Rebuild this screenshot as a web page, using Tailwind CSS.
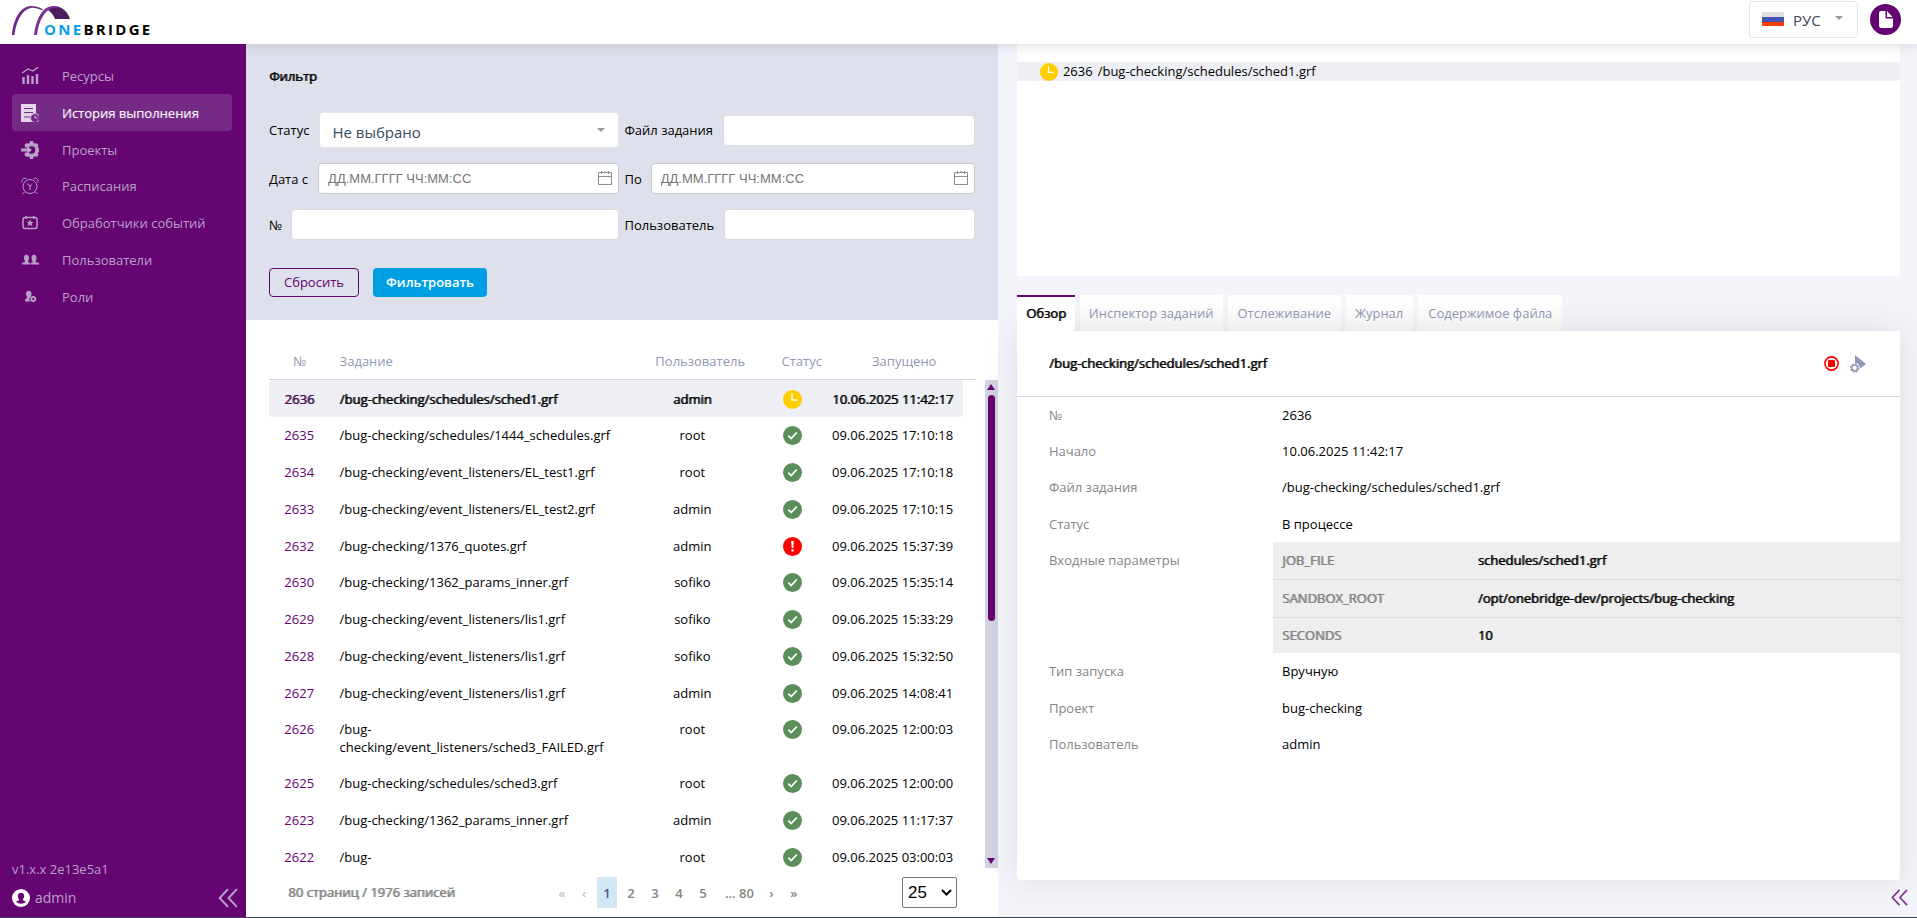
<!DOCTYPE html>
<html lang="ru">
<head>
<meta charset="utf-8">
<title>OneBridge</title>
<script src="https://cdn.jsdelivr.net/npm/@tailwindcss/browser@4"></script>
</head>
<body class="flex h-screen flex-col overflow-hidden border-b border-[#3d444d] bg-[#f4f5fa] font-['Open_Sans','Noto_Sans',sans-serif] text-[13px] leading-[18px] text-black">

<svg class="hidden" aria-hidden="true">
  <symbol id="ok" viewBox="0 0 19 19"><circle cx="9.500" cy="9.500" r="9.500" fill="#5a8f5c"/><path d="M5.300 9.600l2.900 2.900 5.600-6" fill="none" stroke="#fff" stroke-width="1.700"/></symbol>
  <symbol id="err" viewBox="0 0 19 19"><circle cx="9.500" cy="9.500" r="9.500" fill="#f00"/><path d="M8.200 4h2.600l-.5 7H8.700zM8.400 12.300h2.200v2.200H8.400z" fill="#fff"/></symbol>
  <symbol id="wait" viewBox="0 0 19 19"><circle cx="9.500" cy="9.500" r="9.500" fill="#ffcd00"/><path d="M9 3v7h5.500" fill="none" stroke="#fff" stroke-width="1.300"/></symbol>
  <symbol id="cal" viewBox="0 0 14 14"><path d="M.5 1.500h13v12H.5zM.5 5.500h13M3.500 0v3M7 0v1M10.500 0v3" fill="none" stroke="#8c8c8c"/></symbol>
  <symbol id="less" viewBox="0 0 18 18"><path d="M9 1L1.500 9 9 17M17 1L9.500 9 17 17" fill="none" stroke="currentColor" stroke-width="1.800"/></symbol>
</svg>

<header class="relative z-10 flex h-11 shrink-0 items-center bg-white pl-3 pr-4 shadow-[0_0_16px_rgba(0,0,0,0.15)]">
  <a href="#" aria-label="OneBridge" class="mr-auto">
    <svg width="142" height="44" viewBox="12 0 142 44">
      <path d="M12 35C13 20 20 6 31 6c5 0 9 1.500 12 3.500l-1 .7C38 8.500 34 7.500 31 8 22 9.500 16 22 14.500 35z" fill="#6d2d84"/>
      <path d="M48 10c3-2.800 6-4 10-3.300C64 8 68 13 70 19H55c-1.500-4-4-7-7-9z" fill="#4c1d5e"/>
      <path d="M34 35C36 20 42 6 53 6c4 0 7 1 10 3-4-1.500-7-2-10-1C44 10 38.500 22 37 35z" fill="#7b3093"/>
      <text x="44" y="35" font-family="Open Sans" font-size="15" font-weight="700" letter-spacing="2.300" fill="#0aa0e6">ONE<tspan fill="#000">BRIDGE</tspan></text>
    </svg>
  </a>
  <div class="flex items-center gap-3 pb-1.5">
    <button class="flex h-[37px] w-[109px] items-center rounded border border-[#e3e4e8] bg-white pl-3 text-[15px] text-[#3b4859]">
      <svg width="22" height="14"><path d="M0 0h22v5H0z" fill="#dfdfdf"/><path d="M0 5h22v5H0z" fill="#4453b5"/><path d="M0 10h22v4H0z" fill="#ff3c00"/></svg>
      <span class="ml-[9px] mr-3.5 pt-0.5">РУС</span>
      <svg width="8" height="4" class="mb-0.5"><path d="M0 0h8L4 4z" fill="#999"/></svg>
    </button>
    <button aria-label="Документ" class="h-[31px] w-[31px]">
      <svg width="31" height="31" viewBox="0 0 31 31"><circle cx="15.500" cy="15.500" r="15.500" fill="#640572"/><path d="M11 7h4.500v7.500H23v7a2.500 2.500 0 0 1-2.500 2.500H11.500A2.500 2.500 0 0 1 9 21.500V9a2 2 0 0 1 2-2z" fill="#fff"/><path d="M17 7l5.500 6H17z" fill="#fff"/></svg>
    </button>
  </div>
</header>

<div class="flex min-h-0 flex-1">

<aside class="relative z-20 flex w-[246px] shrink-0 flex-col bg-[#640572] pl-3 pr-3.5 pt-[13px] text-[#b9a0c9]">
  <nav class="flex flex-col">
    <a href="#" class="flex h-[37px] items-center gap-[23px] pl-[9px]"><svg width="18" height="18" fill="none" stroke="currentColor"><path d="M1 6l6-4 5 2 5-4" stroke-width="1.300"/><path d="M2.500 17v-7M7 17V8M11.500 17V9M16 17V7" stroke-width="2.400"/></svg>Ресурсы</a>
    <a href="#" class="flex h-[37px] items-center gap-[23px] rounded bg-[#752b85] pl-[9px] text-white [text-shadow:1px_0_rgba(255,255,255,0.2)]"><svg width="18" height="18"><path d="M0 0h15v18H0z" fill="#e6d6ec"/><path d="M3 4.500h9M3 8.500h9M3 13h6" stroke="#752b85"/><circle cx="14" cy="14" r="4.500" fill="#752b85" stroke="#cdb5d8"/><path d="M14 11.500V14h2.500" fill="none" stroke="#cdb5d8"/></svg>История выполнения</a>
    <a href="#" class="flex h-[37px] items-center gap-[23px] pl-[9px]"><svg width="18" height="18" fill="none" stroke="currentColor"><circle cx="10.500" cy="9" r="5.500" stroke-width="3.500"/><path d="M10.500 0v3M10.500 15v3M15 9h3M4.500 3l2 2M16.500 3l-2 2M4.500 15l2-2M16.500 15l-2-2" stroke-width="3.500"/><path d="M0 9h6" stroke="#640572" stroke-width="5"/><path d="M0 7.500h6V5l5 4-5 4v-2.500H0z" fill="currentColor" stroke="none"/></svg>Проекты</a>
    <a href="#" class="flex h-9 items-center gap-[23px] pl-[9px]"><svg width="18" height="18" fill="none" stroke="currentColor"><circle cx="9" cy="9.500" r="7"/><path d="M6 6.500L9 9l2-1.500M9 9v4M1 5.500C.5 2 2.500.5 5.500 1.500M17 5.500c.5-3.500-1.500-5-4.500-4M3.500 15l-2 2M14.500 15l2 2"/></svg>Расписания</a>
    <a href="#" class="flex h-[37px] items-center gap-[23px] pl-[9px]"><svg width="18" height="18" fill="none" stroke="currentColor"><rect x="2" y="3.500" width="14" height="11" rx="2" stroke-width="1.500"/><path d="M5 2v3M13 2v3" stroke-width="1.500"/><path d="M9 5.500l1 2.200 2.500.2-1.800 1.700.6 2.400L9 10.700 6.700 12l.6-2.400-1.800-1.700 2.500-.2z" fill="currentColor" stroke="none"/></svg>Обработчики событий</a>
    <a href="#" class="flex h-[37px] items-center gap-[23px] pl-[9px]"><svg width="18" height="18" fill="currentColor"><path d="M3 6.500C3 2.800 8 2.800 8 6.500 8 9 7 10 7 11l2 1v1.500H1V12l3-1C4 10 3 9 3 6.500zM10.500 6.500c0-3.700 5-3.700 5 0C15.500 9 14.500 10 14.500 11l3.500 1v1.500H9.700V12l2-1c0-1-1.200-2-1.200-4.500z"/></svg>Пользователи</a>
    <a href="#" class="flex h-[37px] items-center gap-[23px] pl-[9px]"><svg width="18" height="18" fill="currentColor"><path d="M5 5.500c0-3.800 5.600-3.800 5.600 0 0 1.700-.8 2.300-.8 3.500-2 2-2 3 .2 4.500H4v-2l2-1.500V9C5.600 8 5 7.500 5 5.500z"/><circle cx="12.300" cy="11" r="2" fill="none" stroke="currentColor" stroke-width="1.800"/></svg>Роли</a>
  </nav>
  <div class="mt-auto pb-[9px]">
    <p>v1.x.x 2e13e5a1</p>
    <div class="mt-2.5 flex items-center gap-[5px] text-[14px]">
      <svg width="18" height="18" viewBox="0 0 18 18"><circle cx="9" cy="9" r="9" fill="#fff"/><path d="M5.800 7c0-4.300 6.400-4.300 6.400 0 0 2-1.400 3-1.400 4.200l3.200 1.300c-2.500 3-7.500 3-10 0l3.200-1.300C7.200 10 5.800 9 5.800 7z" fill="#640572"/></svg>
      admin
      <button aria-label="Свернуть меню" class="ml-auto -mr-1.5"><svg width="20" height="20"><use href="#less"/></svg></button>
    </div>
  </div>
</aside>

<div class="flex min-w-0 flex-1">
<main class="flex w-[45%] shrink-0 flex-col bg-white">
  <form class="bg-[#dee0eb] px-[23px] pt-[23px] pb-[23px]">
    <h2 class="[text-shadow:1px_0_rgba(0,0,0,0.8)]">Фильтр</h2>
    <div class="mt-[27px] grid grid-cols-2 gap-x-[5px] gap-y-[15px]">
      <div class="flex items-center gap-2.5"><label for="st">Статус</label>
        <div class="relative min-w-0 flex-1"><select id="st" class="h-9 w-full appearance-none rounded border border-[#e4e5ec] bg-white px-3 pt-1 text-[15px] text-[#35495e]"><option>Не выбрано</option></select>
        <svg width="8" height="4" class="pointer-events-none absolute right-3.5 top-4"><path d="M0 0h8L4 4z" fill="#999"/></svg></div></div>
      <div class="flex items-center gap-2.5"><label for="jf">Файл задания</label><input id="jf" class="h-[31px] min-w-0 flex-1 rounded border border-[#dcdce0] bg-white px-2"></div>
      <div class="flex items-center gap-2.5"><label for="df">Дата с</label>
        <div class="relative min-w-0 flex-1"><input id="df" placeholder="ДД.ММ.ГГГГ ЧЧ:ММ:СС" class="block h-[31px] w-full rounded border border-[#c8c8cc] bg-white px-[9px] font-['Liberation_Sans',sans-serif] text-[13px] placeholder:text-[#777]"><svg width="14" height="14" class="pointer-events-none absolute right-[7px] top-2"><use href="#cal"/></svg></div></div>
      <div class="flex items-center gap-[9px]"><label for="dt">По</label>
        <div class="relative min-w-0 flex-1"><input id="dt" placeholder="ДД.ММ.ГГГГ ЧЧ:ММ:СС" class="block h-[31px] w-full rounded border border-[#c8c8cc] bg-white px-[9px] font-['Liberation_Sans',sans-serif] text-[13px] placeholder:text-[#777]"><svg width="14" height="14" class="pointer-events-none absolute right-[7px] top-2"><use href="#cal"/></svg></div></div>
      <div class="flex items-center gap-[9px]"><label for="no">№</label><input id="no" class="h-[31px] min-w-0 flex-1 rounded border border-[#dcdce0] bg-white px-2"></div>
      <div class="flex items-center gap-2.5"><label for="us">Пользователь</label><input id="us" class="h-[31px] min-w-0 flex-1 rounded border border-[#dcdce0] bg-white px-2"></div>
    </div>
    <div class="mt-7 flex gap-3.5">
      <button type="reset" class="h-[29px] w-[90px] rounded-sm border border-[#640572] pb-px text-[#640572]">Сбросить</button>
      <button type="button" class="h-[29px] w-[114px] rounded-sm bg-[#009fe3] pb-px font-semibold text-white">Фильтровать</button>
    </div>
  </form>

  <div class="pl-[23px] pr-[22px] pt-[23px]">
    <table class="w-full table-fixed border-b border-[#d1d3e0] text-[#9298b3]">
      <colgroup><col class="w-[9%]"><col class="w-[42%]"><col class="w-[20%]"><col class="w-[9%]"><col class="w-[20%]"></colgroup>
      <thead><tr class="h-9"><th class="pr-0.5 font-normal">№</th><th class="pl-[7px] text-left font-normal">Задание</th><th class="font-normal">Пользователь</th><th class="pr-0.5 font-normal">Статус</th><th class="pr-0.5 font-normal">Запущено</th></tr></thead>
    </table>
  </div>
  <div class="flex min-h-0 flex-1">
    <div class="min-w-0 flex-1 overflow-hidden pl-[23px] pr-[22px]">
      <table class="w-full table-fixed">
        <colgroup><col class="w-[9%]"><col class="w-[42%]"><col class="w-[20%]"><col class="w-[9%]"><col class="w-[20%]"></colgroup>
        <tbody id="rows"></tbody>
      </table>
    </div>
    <div class="flex w-[13px] shrink-0 flex-col items-center bg-[#d1d3e0] py-1">
      <svg width="8" height="6"><path d="M0 6L4 0l4 6z" fill="#640572"/></svg>
      <div class="mt-[5px] h-[226px] w-[7px] rounded-full bg-[#640572]"></div>
      <svg width="8" height="6" class="mt-auto"><path d="M0 0h8L4 6z" fill="#640572"/></svg>
    </div>
  </div>

  <footer class="flex h-[49px] shrink-0 items-center pl-[42px] pr-[41px] text-[#858585]">
    <p class="pb-px [text-shadow:1px_0_rgba(133,133,133,0.9)]">80 страниц / 1976 записей</p>
    <nav class="ml-auto mr-[97px] flex items-center font-semibold">
      <button class="w-[22px] text-[#c4c4c4]">«</button><button class="w-[22px] text-[#c4c4c4]">‹</button>
      <button class="mx-0.5 h-[31px] w-5 bg-[#d3e7f2] text-[#3a5a9a]">1</button>
      <button class="w-6">2</button><button class="w-6">3</button><button class="w-6">4</button><button class="w-6">5</button>
      <button class="w-[45px] pl-1">... 80</button><button class="w-[23px]">›</button><button class="w-[22px]">»</button>
    </nav>
    <div class="relative">
      <select aria-label="Записей на странице" class="h-[31px] w-[55px] appearance-none rounded-xs border border-[#767676] bg-white pl-[5px] font-['Liberation_Sans',sans-serif] text-[17px] text-black"><option>25</option></select>
      <svg width="11" height="7" class="pointer-events-none absolute right-[5px] top-3"><path d="M1 1l4.500 4.500L10 1" fill="none" stroke="#000" stroke-width="2"/></svg>
    </div>
  </footer>
</main>

<section class="relative flex min-w-0 flex-1 flex-col pl-[19px] pr-[17px] pb-[37px]">
  <div class="h-[232px] shrink-0 bg-white pt-[18px]">
    <a href="#" class="flex h-[19px] items-center gap-[5px] rounded-r bg-[#eeeff4] pl-[23px]"><svg width="18" height="18"><use href="#wait"/></svg><span class="pb-0.5">2636</span><span class="pb-0.5">/bug-checking/schedules/sched1.grf</span></a>
  </div>
  <div class="mt-[19px] flex h-9 shrink-0 gap-[5px] text-[#9298b3]" role="tablist">
    <button role="tab" aria-selected="true" class="z-10 border-t-2 border-[#640572] bg-white px-[9px] pb-0.5 text-black [text-shadow:1px_0_rgba(0,0,0,0.8)]">Обзор</button>
    <button role="tab" class="border-t-2 border-white bg-linear-to-b from-white to-[#fafafa] pl-[9px] pr-2.5 pb-0.5">Инспектор заданий</button>
    <button role="tab" class="border-t-2 border-white bg-linear-to-b from-white to-[#fafafa] pl-[9px] pr-2.5 pb-0.5">Отслеживание</button>
    <button role="tab" class="border-t-2 border-white bg-linear-to-b from-white to-[#fafafa] pl-[9px] pr-2.5 pb-0.5">Журнал</button>
    <button role="tab" class="border-t-2 border-white bg-linear-to-b from-white to-[#fafafa] px-2.5 pb-0.5">Содержимое файла</button>
  </div>
  <div class="min-h-0 flex-1 rounded-b bg-white shadow-[0_0_32px_rgba(60,60,80,0.13)]">
    <div class="flex h-[66px] items-center border-b border-[#d9dadd] pl-8 pr-[34px]">
      <h3 class="mr-auto pb-0.5 [text-shadow:1px_0_rgba(0,0,0,0.8)]">/bug-checking/schedules/sched1.grf</h3>
      <button aria-label="Остановить"><svg width="15" height="15"><circle cx="7.500" cy="7.500" r="6.600" fill="none" stroke="#f00" stroke-width="1.600"/><rect x="4" y="4" width="7" height="7" rx="1" fill="#f00"/></svg></button>
      <button aria-label="Запустить с параметрами" class="ml-[11px]"><svg width="16" height="18"><path d="M5 0l11 9-6 4.500C10 10 8 8 5 8z" fill="#9298b3"/><circle cx="4.700" cy="13" r="2.900" fill="none" stroke="#9298b3" stroke-width="1.500"/><circle cx="4.700" cy="13" r="4" fill="none" stroke="#9298b3" stroke-width="1.500" stroke-dasharray="1.600 1.540"/></svg></button>
    </div>
    <table class="w-full table-fixed text-left">
      <colgroup><col class="w-[29%]"><col class="w-[71%]"></colgroup>
      <tbody>
        <tr class="h-9"><th class="pl-8 font-normal text-[#858585]">№</th><td class="pl-[9px]">2636</td></tr>
        <tr class="h-9"><th class="pl-8 font-normal text-[#858585]">Начало</th><td class="pl-[9px]">10.06.2025 11:42:17</td></tr>
        <tr class="h-9"><th class="pl-8 font-normal text-[#858585]">Файл задания</th><td class="pl-[9px]">/bug-checking/schedules/sched1.grf</td></tr>
        <tr class="h-[37px]"><th class="pl-8 font-normal text-[#858585]">Статус</th><td class="pl-[9px]">В процессе</td></tr>
        <tr><th class="pl-8 pt-[9px] align-top font-normal text-[#858585]">Входные параметры</th><td>
          <table class="w-full table-fixed bg-[#eee]">
            <colgroup><col class="w-[32%]"><col class="w-[68%]"></colgroup>
            <tbody>
            <tr class="h-[37px] border-b border-[#d9dadd]"><th class="pl-[9px] font-normal text-[#858585] [text-shadow:1px_0_rgba(133,133,133,0.9)]">JOB_FILE</th><td class="pl-1 [text-shadow:1px_0_rgba(0,0,0,0.8)]">schedules/sched1.grf</td></tr>
            <tr class="h-[38px] border-b border-[#d9dadd]"><th class="pl-[9px] font-normal text-[#858585] [text-shadow:1px_0_rgba(133,133,133,0.9)]">SANDBOX_ROOT</th><td class="pl-1 [text-shadow:1px_0_rgba(0,0,0,0.8)]">/opt/onebridge-dev/projects/bug-checking</td></tr>
            <tr class="h-9"><th class="pl-[9px] font-normal text-[#858585] [text-shadow:1px_0_rgba(133,133,133,0.9)]">SECONDS</th><td class="pl-1 [text-shadow:1px_0_rgba(0,0,0,0.8)]">10</td></tr>
            </tbody>
          </table></td></tr>
        <tr class="h-9"><th class="pl-8 font-normal text-[#858585]">Тип запуска</th><td class="pl-[9px]">Вручную</td></tr>
        <tr class="h-[37px]"><th class="pl-8 font-normal text-[#858585]">Проект</th><td class="pl-[9px]">bug-checking</td></tr>
        <tr class="h-9"><th class="pl-8 font-normal text-[#858585]">Пользователь</th><td class="pl-[9px]">admin</td></tr>
      </tbody>
    </table>
  </div>
  <button aria-label="Развернуть панель" class="absolute bottom-[11px] right-2 text-[#863090]"><svg width="19" height="17"><use href="#less"/></svg></button>
</section>
</div>
</div>

<script>
const runs = [
  [2636, "/bug-checking/schedules/sched1.grf", "admin", "wait", "10.06.2025 11:42:17"],
  [2635, "/bug-checking/schedules/1444_schedules.grf", "root", "ok", "09.06.2025 17:10:18"],
  [2634, "/bug-checking/event_listeners/EL_test1.grf", "root", "ok", "09.06.2025 17:10:18"],
  [2633, "/bug-checking/event_listeners/EL_test2.grf", "admin", "ok", "09.06.2025 17:10:15"],
  [2632, "/bug-checking/1376_quotes.grf", "admin", "err", "09.06.2025 15:37:39"],
  [2630, "/bug-checking/1362_params_inner.grf", "sofiko", "ok", "09.06.2025 15:35:14"],
  [2629, "/bug-checking/event_listeners/lis1.grf", "sofiko", "ok", "09.06.2025 15:33:29"],
  [2628, "/bug-checking/event_listeners/lis1.grf", "sofiko", "ok", "09.06.2025 15:32:50"],
  [2627, "/bug-checking/event_listeners/lis1.grf", "admin", "ok", "09.06.2025 14:08:41"],
  [2626, "/bug-checking/event_listeners/sched3_FAILED.grf", "root", "ok", "09.06.2025 12:00:03"],
  [2625, "/bug-checking/schedules/sched3.grf", "root", "ok", "09.06.2025 12:00:00"],
  [2623, "/bug-checking/1362_params_inner.grf", "admin", "ok", "09.06.2025 11:17:37"],
  [2622, "/bug-checking/event_listeners/sched3_FAILED.grf", "root", "ok", "09.06.2025 03:00:03"]
];
const normal = "align-top";
const active = "align-top bg-[#eeeff4] [text-shadow:1px_0_rgba(0,0,0,0.8)]";
document.getElementById("rows").innerHTML = runs.map(([id, file, user, state, date], i) => {
  const pad = i === 0 ? "pt-2.5 pb-2" : i % 4 === 0 ? "pt-[9px] pb-2" : "py-[9px]";
  return `
  <tr class="${i ? normal : active}">
    <td class="${pad} rounded-l pr-0.5 text-center text-[#640572]">${id}</td>
    <td class="${pad} pl-2 pr-2">${file}</td>
    <td class="${pad} text-center">${user}</td>
    <td class="${pad}"><svg width="19" height="19" class="mx-auto block"><use href="#${state}"/></svg></td>
    <td class="${pad} rounded-r pr-0.5 text-center">${date}</td>
  </tr>`;
}).join("");
</script>
</body>
</html>
